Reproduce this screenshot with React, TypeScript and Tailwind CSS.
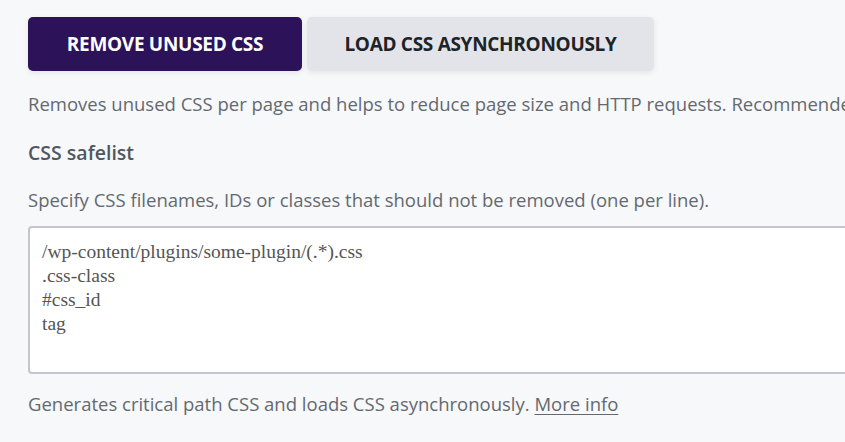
import React, { useState } from 'react';

const safelistDefault = `/wp-content/plugins/some-plugin/(.*).css
.css-class
#css_id
tag`;

export default function App() {
  const [tab, setTab] = useState<'remove' | 'async'>('remove');
  const [safelist, setSafelist] = useState(safelistDefault);

  return (
    <div className="min-h-[442px] w-[845px] overflow-hidden bg-[#f7f8fa] pl-[28px] pt-[17px] font-['Open_Sans',sans-serif] text-[#646970]">
      <div className="flex gap-[5px]">
        <button
          onClick={() => setTab('remove')}
          className={`h-[54px] w-[274px] rounded-[5px] text-[19px] font-bold tracking-[-0.3px] ${
            tab === 'remove' ? 'bg-[#2c1259] text-white' : 'bg-[#e2e4e9] text-[#1d2327]'
          } shadow-[0_2px_6px_rgba(0,0,0,0.08)]`}
        >
          REMOVE UNUSED CSS
        </button>
        <button
          onClick={() => setTab('async')}
          className={`h-[54px] w-[347px] rounded-[5px] text-[19px] font-bold tracking-[-0.3px] ${
            tab === 'async' ? 'bg-[#2c1259] text-white' : 'bg-[#e2e4e9] text-[#1d2327]'
          } shadow-[0_2px_6px_rgba(0,0,0,0.08)]`}
        >
          LOAD CSS ASYNCHRONOUSLY
        </button>
      </div>

      <p className="mt-[20px] whitespace-nowrap text-[18.5px] leading-[26px]">
        Removes unused CSS per page and helps to reduce page size and HTTP requests. Recommended
      </p>

      <h3 className="mt-[22px] text-[19.5px] font-semibold leading-[28px] text-[#50575e]">CSS safelist</h3>
      <p className="mt-[20px] whitespace-nowrap text-[18.5px] leading-[26px]">
        Specify CSS filenames, IDs or classes that should not be removed (one per line).
      </p>

      <textarea
        value={safelist}
        onChange={(e) => setSafelist(e.target.value)}
        className="mt-[13px] block h-[148px] w-[840px] resize-none rounded-[4px] border-2 border-[#c3c6cc] bg-white px-[12px] py-[12px] font-['Liberation_Serif',serif] text-[19.5px] leading-[24px] text-[#555] outline-none"
      />

      <p className="mt-[17px] whitespace-nowrap text-[18.5px] leading-[26px]">
        Generates critical path CSS and loads CSS asynchronously.{' '}
        <a href="#" className="underline underline-offset-[3px]">
          More info
        </a>
      </p>
    </div>
  );
}
